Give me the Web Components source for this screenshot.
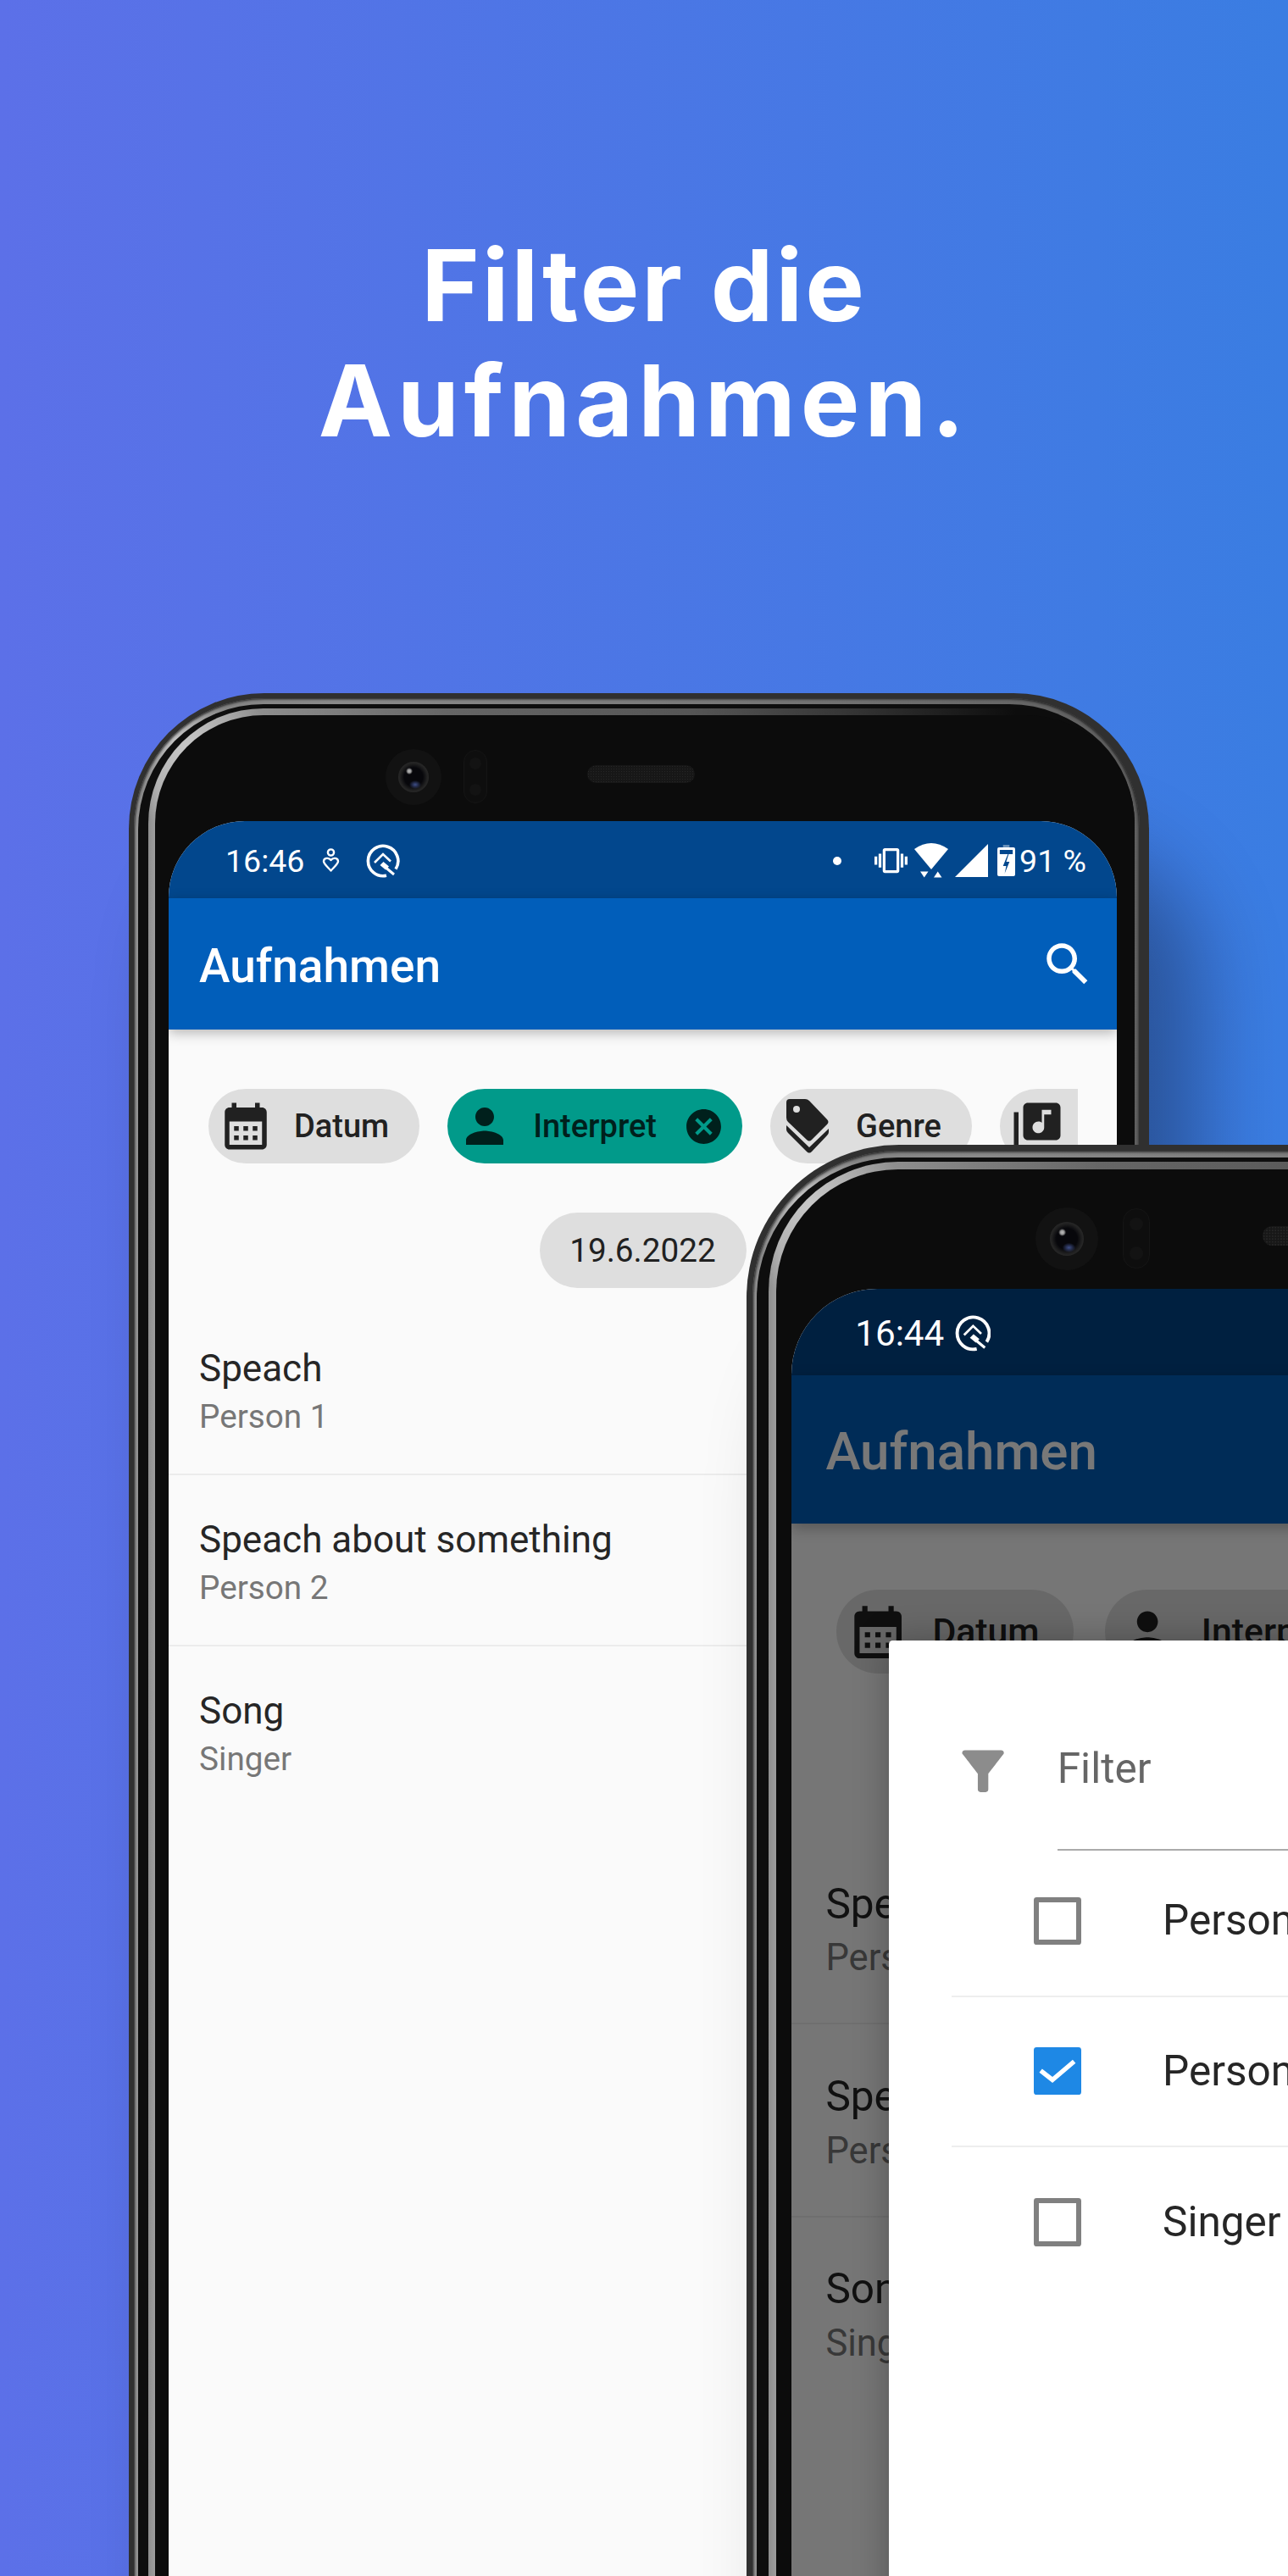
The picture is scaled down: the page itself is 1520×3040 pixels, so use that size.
<!DOCTYPE html>
<html lang="de">
<head>
<meta charset="utf-8">
<title>Filter die Aufnahmen</title>
<style>
  html, body { margin: 0; padding: 0; }
</style>
</head>
<body>
<shot-stage>
  <hero-title>
    <span style="letter-spacing:3px">Filter die</span><br>
    <span style="letter-spacing:6px">Aufnahmen.</span>
  </hero-title>

  <phone-frame>
    <status-bar time="16:46">
      <app-icon slot="left" name="heart" w="22" h="30" style="margin-left:21px"></app-icon>
      <app-icon slot="left" name="ring" w="40" h="40" style="margin-left:30px"></app-icon>
      <app-icon slot="right" name="dot" w="10" h="10" style="margin-right:39px"></app-icon>
      <app-icon slot="right" name="vibrate" w="39" h="39" style="margin-right:8px"></app-icon>
      <app-icon slot="right" name="wifi" w="40" h="41" style="margin-right:8px"></app-icon>
      <app-icon slot="right" name="signal" w="39" h="39" style="margin-right:11px"></app-icon>
      <app-icon slot="right" name="battery" w="21" h="37" style="margin-right:5px"></app-icon>
      <span slot="right">91 %</span>
    </status-bar>
    <app-bar heading="Aufnahmen"></app-bar>
    <recordings-page active-chip></recordings-page>
  </phone-frame>

  <phone-frame slot="front" big style="--status-bg:#002040">
    <status-bar time="16:44">
      <app-icon slot="left" name="ring" w="38" h="38" style="margin-left:11px"></app-icon>
    </status-bar>
    <app-bar heading="Aufnahmen"></app-bar>
    <recordings-page></recordings-page>
    <dialog-scrim>
      <filter-dialog placeholder="Filter">
        <filter-row>Person 1</filter-row>
        <filter-row checked>Person 2</filter-row>
        <filter-row>Singer</filter-row>
      </filter-dialog>
    </dialog-scrim>
  </phone-frame>
</shot-stage>

<script>
const ROBOTO = 'Roboto, "Liberation Sans", sans-serif';

const ICONS = {
  calendar: ['0 0 24 24', '<path d="M19 4h-1V2h-2v2H8V2H6v2H5c-1.11 0-1.99.9-1.99 2L3 20c0 1.1.89 2 2 2h14c1.1 0 2-.9 2-2V6c0-1.1-.9-2-2-2zm0 16H5V10h14v10zM9 14H7v-2h2v2zm4 0h-2v-2h2v2zm4 0h-2v-2h2v2zm-8 4H7v-2h2v2zm4 0h-2v-2h2v2zm4 0h-2v-2h2v2z"/>'],
  person: ['0 0 24 24', '<path d="M12 12c2.21 0 4-1.79 4-4s-1.79-4-4-4-4 1.79-4 4 1.79 4 4 4zm0 2c-2.67 0-8 1.34-8 4v2h16v-2c0-2.66-5.33-4-8-4z"/>'],
  cancel: ['0 0 24 24', '<path d="M12 2C6.47 2 2 6.47 2 12s4.47 10 10 10 10-4.47 10-10S17.53 2 12 2zm5 13.59L15.59 17 12 13.41 8.41 17 7 15.59 10.59 12 7 8.41 8.41 7 12 10.59 15.59 7 17 8.41 13.41 12 17 15.59z"/>'],
  tags: ['0 0 50 64', '<path fill-rule="evenodd" d="M4 0h18q3 0 5 2l21 22q3 3 0 6L30 48q-3 3-6 0L2 27q-2-2-2-5V4q0-4 4-4zm8 8a4 4 0 1 0 0 8 4 4 0 0 0 0-8z"/><path d="M0 31l27 26 23-22v4q0 2-2 4L30 62q-3 3-6 0L2 40q-2-2-2-4z"/>'],
  music: ['0 0 24 24', '<path d="M20 2H8c-1.1 0-2 .9-2 2v12c0 1.1.9 2 2 2h12c1.1 0 2-.9 2-2V4c0-1.1-.9-2-2-2zm-2 5h-3v5.5c0 1.38-1.12 2.5-2.5 2.5S10 13.88 10 12.5s1.12-2.5 2.5-2.5c.57 0 1.08.19 1.5.51V5h4v2zM4 6H2v14c0 1.1.9 2 2 2h14v-2H4V6z"/>'],
  search: ['0 0 24 24', '<path d="M15.5 14h-.79l-.28-.27C15.41 12.59 16 11.11 16 9.5 16 5.91 13.09 3 9.5 3S3 5.91 3 9.5 5.91 16 9.5 16c1.61 0 3.09-.59 4.23-1.57l.27.28v.79l5 4.99L20.49 19l-4.99-5zm-6 0C7.01 14 5 11.99 5 9.5S7.01 5 9.5 5 14 7.01 14 9.5 11.99 14 9.5 14z"/>'],
  filter: ['0 0 24 24', '<path d="M4.25 5.61C6.27 8.2 10 13 10 13v6c0 .55.45 1 1 1h2c.55 0 1-.45 1-1v-6s3.72-4.8 5.74-7.39c.51-.66.04-1.61-.79-1.61H5.04c-.83 0-1.3.95-.79 1.61z"/>'],
  vibrate: ['0 0 24 24', '<path d="M0 15h2V9H0v6zm3 2h2V7H3v10zm19-8v6h2V9h-2zm-3 8h2V7h-2v10zM16.5 3h-9C6.67 3 6 3.67 6 4.5v15c0 .83.67 1.5 1.5 1.5h9c.83 0 1.5-.67 1.5-1.5v-15c0-.83-.67-1.5-1.5-1.5zM16 19H8V5h8v14z"/>'],
  wifi: ['0 0 40 41', '<path d="M0 7Q20-7 40 7L20 31Z"/><path d="M7 33.500h9.500L11.700 40.500ZM23 40.500h9.500L27.700 33.500Z"/>'],
  signal: ['0 0 39 39', '<path d="M0 39 39 0v39z"/>'],
  battery: ['0 0 22 37', '<path d="M7 0h8v3H7z" opacity=".4"/><path fill-rule="evenodd" d="M2 3h18a2 2 0 0 1 2 2v30a2 2 0 0 1-2 2H2a2 2 0 0 1-2-2V5a2 2 0 0 1 2-2zm1 3v5h16V6z"/><path d="M13 11l-6 14h4l-2 9 6-14h-4l3-9z" fill="#02478d"/>'],
  dot: ['0 0 10 10', '<circle cx="5" cy="5" r="5"/>'],
  heart: ['0 0 22 30', '<g fill="none" stroke="#fff" stroke-width="2.400"><circle cx="10.500" cy="5" r="3.600"/><path d="M10.500 14C8 10.500 2 11.500 2 15.500c0 3 5 7 8.500 11 3.500-4 8.500-8 8.500-11 0-4-6-5-8.500-1.500z" stroke-linejoin="round"/></g>'],
  ring: ['0 0 40 40', '<g fill="none" stroke="#fff"><path d="M24 37.300A17.700 17.700 0 1 1 35 29.600" stroke-width="3.600"/><path d="M10 22 20 12 29 20.500" stroke-width="2.600"/><path d="M24 28.500l9 7.500" stroke-width="3"/></g><path d="M16.500 25 20.500 21l6.500 5.500-4 4z" fill="#fff"/>']
};

class AppIcon extends HTMLElement {
  connectedCallback() {
    const [box, body] = ICONS[this.getAttribute('name')];
    const w = this.getAttribute('w') || 66;
    const h = this.getAttribute('h') || w;
    const shadow = this.attachShadow({ mode: 'open' });
    shadow.innerHTML = `
      <style>
        :host { display: block; flex: none; width: ${w}px; height: ${h}px; }
        svg { display: block; width: 100%; height: 100%; fill: currentColor; }
      </style>
      <svg viewBox="${box}" preserveAspectRatio="none">${body}</svg>`;
  }
}
customElements.define('app-icon', AppIcon);

class ShotStage extends HTMLElement {
  constructor() {
    super();
    this.attachShadow({ mode: 'open' }).innerHTML = `
      <style>
        :host {
          display: block; position: relative; width: 1520px; height: 3040px; overflow: hidden;
          background: linear-gradient(90deg, #5c70e8 0%, #3a7de2 100%);
        }
        .front { position: absolute; left: 881px; top: 1351px; }
      </style>
      <slot></slot>
      <div class="front"><slot name="front"></slot></div>`;
  }
}
customElements.define('shot-stage', ShotStage);

class HeroTitle extends HTMLElement {
  constructor() {
    super();
    this.attachShadow({ mode: 'open' }).innerHTML = `
      <style>
        :host {
          display: block; box-sizing: border-box; height: 818px; padding-top: 269px;
          text-align: center; color: #fff;
          font: 700 117px/136px Inter, "Liberation Sans", sans-serif;
        }
      </style>
      <slot></slot>`;
  }
}
customElements.define('hero-title', HeroTitle);

class PhoneFrame extends HTMLElement {
  constructor() {
    super();
    this.attachShadow({ mode: 'open' }).innerHTML = `
      <style>
        :host {
          display: block; box-sizing: border-box; width: 1204px; height: 2400px; margin-left: 152px;
          border-radius: 160px;
          box-shadow: 60px 180px 100px rgba(0,0,0,.32);
        }
        :host([big]) { zoom: 1.125; margin-left: 0; }
        .case { height: 100%; box-sizing: border-box; border-radius: 160px; background: #303030; padding: 6px 11px 0 6px; }
        .rim {
          height: 100%; box-sizing: border-box; border-radius: 154px; padding: 7px 6px 0 5px;
          box-shadow: inset 0 0 3px 1px #1a1a1a;
          background:
            radial-gradient(circle at 50px 50px, #c4c4c4, transparent 70px),
            linear-gradient(90deg, #999 0, #808080 2%, #8a8a8a 20%, #777 60%, #5e5e5e 100%);
        }
        .groove { height: 100%; box-sizing: border-box; border-radius: 148px; background: #0e0e0e; padding: 5px 0 0 12px; }
        .bevel {
          height: 100%; box-sizing: border-box; border-radius: 136px; padding: 8px 0 0 8px;
          background:
            radial-gradient(circle at 46px 46px, #c8c8c8, transparent 95px),
            linear-gradient(90deg, #8e8e8e 0, #a4a4a4 1%, #666 30%, #565656 55%, #333 72%, #0d0d0d 88%);
        }
        .body {
          height: 100%; box-sizing: border-box; border-radius: 128px; background: #0c0c0c;
          padding: 0 21px 0 16px; display: flex; flex-direction: column;
        }
        .sensors { flex: none; height: 125px; box-sizing: border-box; padding: 20px 0 0 256px; display: flex; align-items: center; }
        .camera {
          width: 66px; height: 66px; border-radius: 50%; background: #121212; display: flex;
          align-items: center; justify-content: center;
        }
        .lens {
          width: 36px; height: 36px; border-radius: 50%;
          background:
            radial-gradient(circle at 13px 11px, #bbb 0, #999 2px, transparent 4px),
            radial-gradient(ellipse 7px 5px at 20px 27px, #3f4f88, transparent),
            radial-gradient(circle, #07070b 0, #07070b 11px, #222 16px, #282828 18px);
        }
        .pill {
          width: 28px; height: 63px; box-sizing: border-box; margin-left: 26px; border-radius: 14px;
          border: 1px solid #151515; display: flex; flex-direction: column; align-items: center;
          justify-content: space-around; background: #0e0e0e;
        }
        .pill i { width: 14px; height: 14px; border-radius: 50%; background: #131313; }
        .speaker {
          width: 127px; height: 21px; margin: -6px 0 0 118px; border-radius: 11px;
          background: #171717 radial-gradient(circle, #262626 0.8px, transparent 1px) 0 0 / 3px 3px;
        }
        .screen {
          position: relative; flex: 1; min-height: 0; overflow: hidden; background: #fafafa;
          border-radius: 90px 90px 0 0; display: flex; flex-direction: column;
        }
      </style>
      <div class="case"><div class="rim"><div class="groove"><div class="bevel"><div class="body">
        <div class="sensors">
          <div class="camera"><div class="lens"></div></div>
          <div class="pill"><i></i><i></i></div>
          <div class="speaker"></div>
        </div>
        <div class="screen"><slot></slot></div>
      </div></div></div></div></div>`;
  }
}
customElements.define('phone-frame', PhoneFrame);

class StatusBar extends HTMLElement {
  connectedCallback() {
    this.attachShadow({ mode: 'open' }).innerHTML = `
      <style>
        :host {
          display: flex; flex: none; height: 91px; box-sizing: border-box; padding: 2px 36px 0 67px;
          align-items: center; color: #fff; background: var(--status-bg, #02478d);
          font: 400 37.500px/40px ${ROBOTO};
        }
        .group { display: flex; align-items: center; }
        .fill { flex: 1; }
      </style>
      <span>${this.getAttribute('time')}</span>
      <div class="group"><slot name="left"></slot></div>
      <div class="fill"></div>
      <div class="group"><slot name="right"></slot></div>`;
  }
}
customElements.define('status-bar', StatusBar);

class AppBar extends HTMLElement {
  connectedCallback() {
    this.attachShadow({ mode: 'open' }).innerHTML = `
      <style>
        :host {
          display: flex; flex: none; position: relative; z-index: 1; height: 155px; box-sizing: border-box;
          padding: 0 25px 0 36px; align-items: center; justify-content: space-between;
          background: #015eba; color: #fff; box-shadow: 0 4px 14px rgba(0,0,0,.28);
          font: 500 55px/64px ${ROBOTO};
        }
        span { margin-top: 5px; }
      </style>
      <span>${this.getAttribute('heading')}</span>
      <app-icon name="search"></app-icon>`;
  }
}
customElements.define('app-bar', AppBar);

class FilterChip extends HTMLElement {
  connectedCallback() {
    const close = this.hasAttribute('active') ? '<app-icon class="close" name="cancel" w="49"></app-icon>' : '';
    this.attachShadow({ mode: 'open' }).innerHTML = `
      <style>
        :host {
          display: flex; flex: none; height: 88px; box-sizing: border-box; border-radius: 44px;
          padding: 0 36px 0 11px; align-items: center; gap: 24px;
          background: #dedede; color: #212121;
          font: 500 38px/44px ${ROBOTO};
        }
        :host([active]) { background: #019a8a; color: #00201c; padding-right: 21px; }
        .close { margin-left: 7px; }
      </style>
      <slot></slot>
      <span>${this.getAttribute('label') || ''}</span>${close}`;
  }
}
customElements.define('filter-chip', FilterChip);

class RecordItem extends HTMLElement {
  connectedCallback() {
    this.attachShadow({ mode: 'open' }).innerHTML = `
      <style>
        :host {
          display: block; height: 202px; box-sizing: border-box; padding: 46px 36px 0;
          border-bottom: 2px solid #ececec;
        }
        :host([last]) { border-bottom: none; }
        .title { font: 400 44px/60px ${ROBOTO}; color: #262626; white-space: nowrap; }
        .sub { font: 400 38.700px/53px ${ROBOTO}; color: #777; white-space: nowrap; }
      </style>
      <div class="title">${this.getAttribute('title')}</div>
      <div class="sub">${this.getAttribute('sub')}</div>`;
  }
}
customElements.define('record-item', RecordItem);

class RecordingsPage extends HTMLElement {
  connectedCallback() {
    const active = this.hasAttribute('active-chip') ? 'active' : '';
    this.attachShadow({ mode: 'open' }).innerHTML = `
      <style>
        :host { display: block; flex: 1; padding-top: 70px; }
        .chips { display: flex; gap: 33px; margin: 0 46px 0 47px; overflow: hidden; }
        .chips .cut { width: 220px; }
        .date {
          width: 244px; height: 89px; margin: 58px auto 19px; border-radius: 45px; background: #dedede;
          display: flex; align-items: center; justify-content: center; color: #212121;
          font: 400 38.700px/44px ${ROBOTO};
        }
      </style>
      <div class="chips">
        <filter-chip label="Datum"><app-icon name="calendar"></app-icon></filter-chip>
        <filter-chip label="Interpret" ${active}><app-icon name="person"></app-icon></filter-chip>
        <filter-chip label="Genre"><app-icon name="tags" w="50" h="64" style="margin:0 8px"></app-icon></filter-chip>
        <filter-chip class="cut"><app-icon name="music"></app-icon></filter-chip>
      </div>
      <div class="date">19.6.2022</div>
      <record-item title="Speach" sub="Person 1"></record-item>
      <record-item title="Speach about something" sub="Person 2"></record-item>
      <record-item title="Song" sub="Singer" last></record-item>`;
  }
}
customElements.define('recordings-page', RecordingsPage);

class DialogScrim extends HTMLElement {
  constructor() {
    super();
    this.attachShadow({ mode: 'open' }).innerHTML = `
      <style>
        :host { display: block; position: absolute; inset: 91px 0 0 0; z-index: 2; background: rgba(0,0,0,.53); }
      </style>
      <slot></slot>`;
  }
}
customElements.define('dialog-scrim', DialogScrim);

class FilterDialog extends HTMLElement {
  connectedCallback() {
    this.attachShadow({ mode: 'open' }).innerHTML = `
      <style>
        :host {
          display: block; position: absolute; left: 102px; right: 102px; top: 278px; bottom: 0;
          background: #fff; border-radius: 4px; box-shadow: 0 0 36px rgba(0,0,0,.28);
        }
        .head { display: flex; height: 220px; box-sizing: border-box; padding: 0 66px; gap: 45px; color: #8c8c8c; }
        .head app-icon { margin-top: 104px; }
        .field {
          flex: 1; height: 220px; box-sizing: border-box; padding-top: 105px; border-bottom: 2px solid #aaa;
          font: 400 44px/60px ${ROBOTO}; color: #666;
        }
        .rows { margin-top: -3.500px; }
      </style>
      <div class="head">
        <app-icon name="filter"></app-icon>
        <div class="field">${this.getAttribute('placeholder')}</div>
      </div>
      <div class="rows"><slot></slot></div>`;
  }
}
customElements.define('filter-dialog', FilterDialog);

class FilterRow extends HTMLElement {
  connectedCallback() {
    const checked = this.hasAttribute('checked');
    this.attachShadow({ mode: 'open' }).innerHTML = `
      <style>
        :host {
          display: flex; height: 157.500px; box-sizing: border-box; margin-left: 66px; padding-left: 86px;
          align-items: center; gap: 85px; border-bottom: 2px solid #eee; color: #262626;
          font: 400 44px/60px ${ROBOTO};
        }
        :host(:last-child) { border-bottom: none; }
        .box {
          flex: none; width: 50.500px; height: 50px; box-sizing: border-box; border-radius: 3px;
          border: 5.500px solid #808080;
        }
        .box.on { border: none; background: #1e88e5; }
        svg { display: block; width: 100%; height: 100%; }
      </style>
      <div class="box ${checked ? 'on' : ''}">${checked ? '<svg viewBox="0 0 57 57"><path d="M8 28l14 11L48 17" fill="none" stroke="#fff" stroke-width="5.500"/></svg>' : ''}</div>
      <slot></slot>`;
  }
}
customElements.define('filter-row', FilterRow);
</script>
</body>
</html>
